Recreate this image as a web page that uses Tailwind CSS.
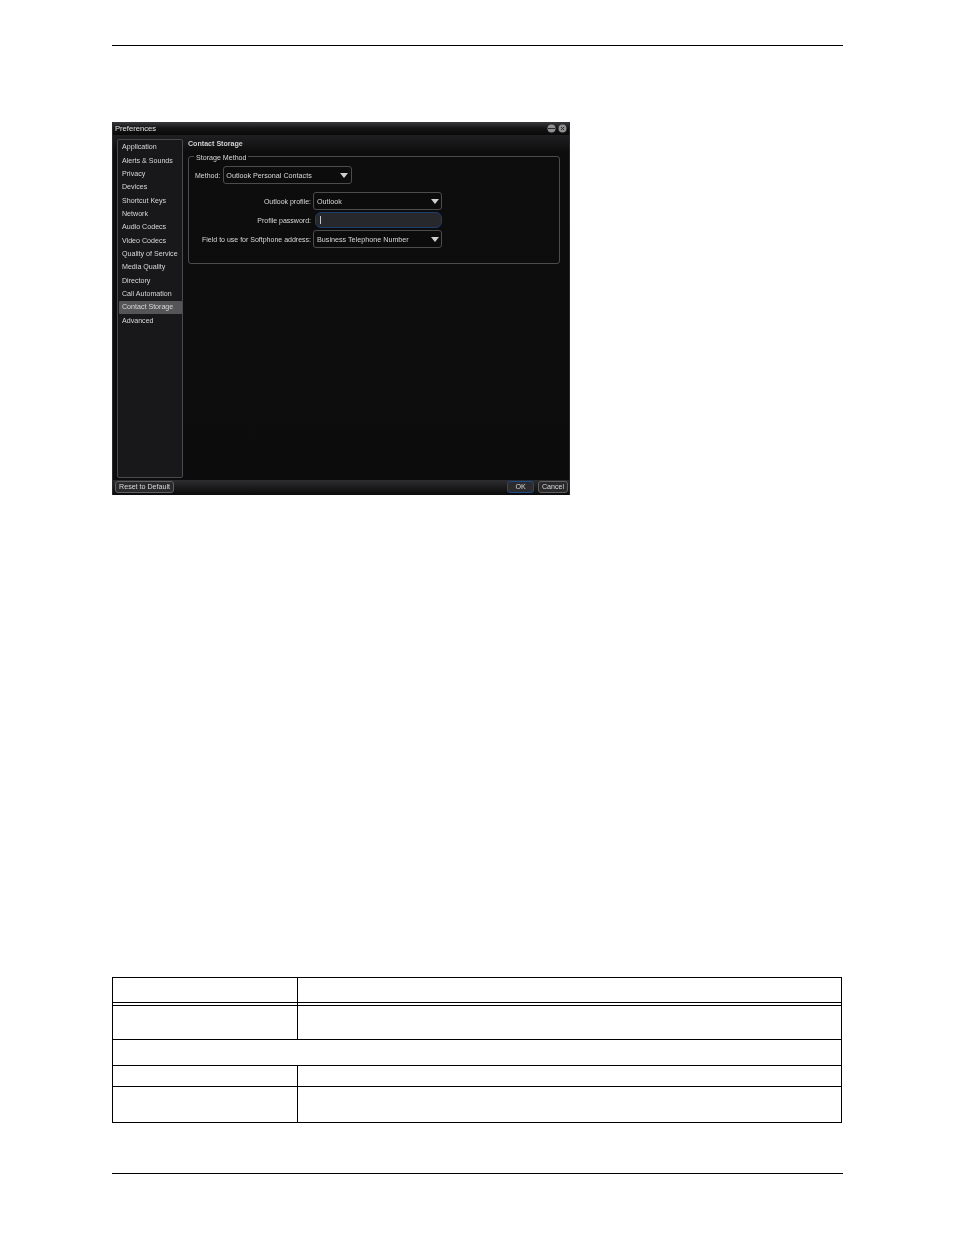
<!DOCTYPE html>
<html lang="en">
<head>
<meta charset="UTF-8">
<title>Preferences</title>
<script src="https://cdn.jsdelivr.net/npm/@tailwindcss/browser@4"></script>
</head>
<body class="bg-white font-['Liberation_Sans',Arial,sans-serif]">
<div class="w-[954px] h-[1235px] pl-[112px] pt-[45px] overflow-hidden">
    <div class="w-[731px] h-px bg-black"></div>

    <!-- preferences window -->
    <div class="mt-[76px] w-[458px] h-[373px] bg-[#0c0c0d] flex flex-col text-[7.1px] leading-[9px] text-[#d8d8d8] border-l border-r border-[#2a2a2c] blur-[0.3px]">
        <div class="h-[13px] shrink-0 flex items-center justify-between pl-[2px] pr-[2px] bg-gradient-to-b from-[#3a3a3c] via-[#141415] to-[#09090a] text-[7.6px] text-[#e4e4e4]">
            <span>Preferences</span>
            <div class="flex gap-[2px]">
                <svg width="9" height="9" viewBox="0 0 9 9"><circle cx="4.5" cy="4.5" r="4" fill="#8e9092"/><rect x="1" y="4" width="7" height="1" fill="#2a2a2a"/></svg>
                <svg width="9" height="9" viewBox="0 0 9 9"><circle cx="4.5" cy="4.5" r="4" fill="#8e9092"/><path d="M3 3l3 3M6 3l-3 3" stroke="#2a2a2a" stroke-width="1"/></svg>
            </div>
        </div>
        <div class="flex-1 flex pt-[4px] pl-[4px] pr-[9px] bg-gradient-to-b from-[#202022] via-[#0d0d0e] via-[5%] to-[#0c0c0d]">
            <ul class="w-[66px] h-[339px] shrink-0 bg-[#18181a] border border-[#4a4a4d] rounded-[2px] pl-px pt-px">
                <li class="h-[13.35px] pl-[3px] flex items-center">Application</li>
                <li class="h-[13.35px] pl-[3px] flex items-center">Alerts &amp; Sounds</li>
                <li class="h-[13.35px] pl-[3px] flex items-center">Privacy</li>
                <li class="h-[13.35px] pl-[3px] flex items-center">Devices</li>
                <li class="h-[13.35px] pl-[3px] flex items-center">Shortcut Keys</li>
                <li class="h-[13.35px] pl-[3px] flex items-center">Network</li>
                <li class="h-[13.35px] pl-[3px] flex items-center">Audio Codecs</li>
                <li class="h-[13.35px] pl-[3px] flex items-center">Video Codecs</li>
                <li class="h-[13.35px] pl-[3px] flex items-center">Quality of Service</li>
                <li class="h-[13.35px] pl-[3px] flex items-center">Media Quality</li>
                <li class="h-[13.35px] pl-[3px] flex items-center">Directory</li>
                <li class="h-[13.35px] pl-[3px] flex items-center">Call Automation</li>
                <li class="h-[13.35px] pl-[3px] flex items-center bg-[#555558] rounded-[1px]">Contact Storage</li>
                <li class="h-[13.35px] pl-[3px] flex items-center">Advanced</li>
            </ul>
            <div class="ml-[5px] flex-1">
                <h2 class="font-bold text-[#d0d0d0] h-[8px] leading-[8px] mt-px">Contact Storage</h2>
                <fieldset class="mt-[4px] h-[112px] border border-[#4c4c4e] rounded-[3px] pl-[5px] pr-[5px]">
                    <legend class="px-[2px] leading-[9px] translate-y-[2px]">Storage Method</legend>
                    <div class="flex items-center gap-[3px] mt-[5px] pl-[1px]">
                        <span class="text-[7px]">Method:</span>
                        <div class="w-[129px] h-[18px] bg-[#0c0c0d] border border-[#4c4c4e] rounded-[3px] flex items-center justify-between pl-[2px] pr-[3px] text-[7.2px]">
                            <span>Outlook Personal Contacts</span>
                            <svg width="8" height="5" viewBox="0 0 8 5"><path d="M0 0h8L4 5z" fill="#d0d0d0"/></svg>
                        </div>
                    </div>
                    <div class="mt-[8px] flex flex-col gap-[2px]">
                        <div class="flex items-center justify-end w-[248px] gap-[2px]">
                            <span class="text-[7px]">Outlook profile:</span>
                            <div class="w-[129px] h-[18px] bg-[#0c0c0d] border border-[#4c4c4e] rounded-[3px] flex items-center justify-between pl-[3px] pr-[2px] text-[7.2px]">
                                <span>Outlook</span>
                                <svg width="8" height="5" viewBox="0 0 8 5"><path d="M0 0h8L4 5z" fill="#d0d0d0"/></svg>
                            </div>
                        </div>
                        <div class="flex items-center justify-end w-[248px] gap-[4px]">
                            <span class="text-[7px]">Profile password:</span>
                            <div class="w-[127px] h-[16px] bg-[#27282b] border border-[#1c3d6e] rounded-[6px] flex items-center pl-[4px]">
                                <span class="w-px h-[8px] bg-[#c8c8c8]"></span>
                            </div>
                        </div>
                        <div class="flex items-center justify-end w-[248px] gap-[2px]">
                            <span class="text-[7px]">Field to use for Softphone address:</span>
                            <div class="w-[129px] h-[18px] bg-[#0c0c0d] border border-[#4c4c4e] rounded-[3px] flex items-center justify-between pl-[3px] pr-[2px] text-[7.2px]">
                                <span>Business Telephone Number</span>
                                <svg width="8" height="5" viewBox="0 0 8 5"><path d="M0 0h8L4 5z" fill="#d0d0d0"/></svg>
                            </div>
                        </div>
                    </div>
                </fieldset>
            </div>
        </div>
        <div class="h-[15px] shrink-0 flex items-center justify-between pl-[2px] pr-[1px] pb-[1px] bg-gradient-to-b from-[#2e2e30] to-[#0a0a0b]">
            <div class="h-[12px] w-[59px] flex items-center justify-center bg-[#2a2a2c] border border-[#606063] rounded-[3px] text-[#d8d8d8]">Reset to Default</div>
            <div class="flex gap-[4px]">
                <div class="h-[12px] w-[27px] flex items-center justify-center bg-[#2c2c2e] border border-[#1d4a8a] rounded-[3px]">OK</div>
                <div class="h-[12px] w-[30px] flex items-center justify-center bg-[#2a2a2c] border border-[#606063] rounded-[3px]">Cancel</div>
            </div>
        </div>
    </div>

    <!-- empty table -->
    <table class="mt-[482px] w-[730px] table-fixed border-collapse border border-black">
        <colgroup><col class="w-[185px]"><col></colgroup>
        <tbody>
            <tr class="h-[25px]"><td class="border border-black"></td><td class="border border-black"></td></tr>
            <tr class="h-[3px]"><td class="border border-black"></td><td class="border border-black"></td></tr>
            <tr class="h-[34px]"><td class="border border-black"></td><td class="border border-black"></td></tr>
            <tr class="h-[26px]"><td colspan="2" class="border border-black"></td></tr>
            <tr class="h-[21px]"><td class="border border-black"></td><td class="border border-black"></td></tr>
            <tr class="h-[36px]"><td class="border border-black"></td><td class="border border-black"></td></tr>
        </tbody>
    </table>

    <div class="mt-[50px] w-[731px] h-px bg-black"></div>
</div>
</body>
</html>
